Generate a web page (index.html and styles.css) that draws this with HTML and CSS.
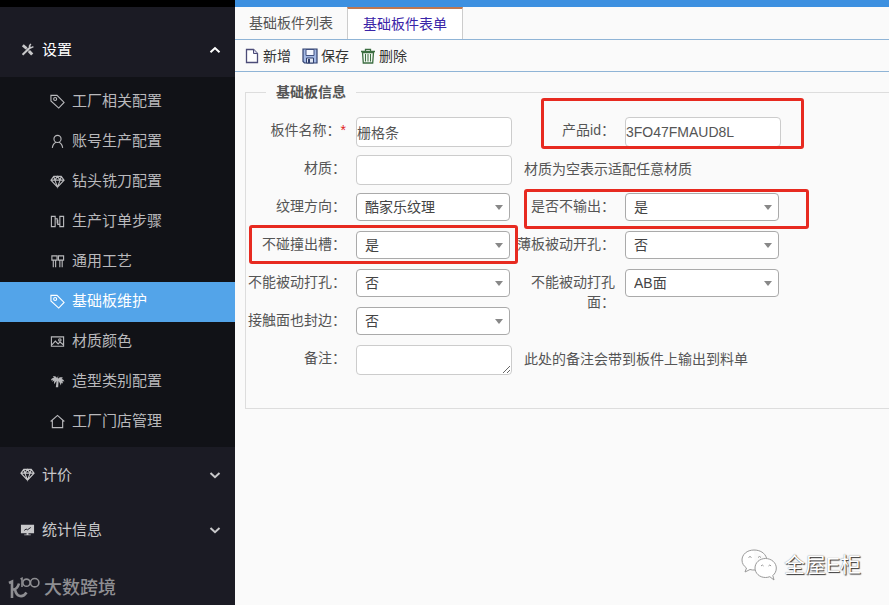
FILE: index.html
```
<!DOCTYPE html>
<html lang="zh-CN">
<head>
    <meta charset="UTF-8">
    <meta name="viewport" content="width=device-width, initial-scale=1.0">
    <title>基础板件表单</title>
    <link rel="stylesheet" href="styles.css">
</head>
<body>
    <svg class="symbols" aria-hidden="true">
        <symbol id="icon-tag" viewBox="0 0 16 16">
            <path d="M1 1.500h6.500l7.500 7.500-5.700 6L1 7.500z"/>
            <circle cx="5.500" cy="5.300" r="1.600"/>
        </symbol>
        <symbol id="icon-gem" viewBox="0 0 16 16">
            <path d="M4 2.500h8l3 4-7 7.500-7-7.500zM1 6.500h14M4 2.500l1.200 4L8 14l2.800-7.500L12 2.500M5.200 6.500L8 2.500l2.800 4"/>
        </symbol>
    </svg>

    <div class="app">
        <aside class="sidebar">
            <button type="button" class="menu-title open">
                <svg class="icon tools" viewBox="0 0 16 16">
                    <path d="M3 3.500l4 3.500" stroke-width="3"/>
                    <path d="M7 7l2 2" stroke-width="1.500"/>
                    <path d="M9.500 9.500l3.500 3.800" stroke-width="3.200"/>
                    <path d="M2.700 13.500L11 5.500" stroke-width="2.200"/>
                    <path d="M11.500 2L10 4.500l1.500 1.800 2.800-1.300" stroke-width="1.600"/>
                </svg>
                <span>设置</span>
                <svg class="arrow" viewBox="0 0 12 8"><path d="M1.500 6.200L6 2l4.500 4.200"/></svg>
            </button>
            <nav class="submenu">
                <a href="#"><svg class="icon"><use href="#icon-tag"/></svg>工厂相关配置</a>
                <a href="#">
                    <svg class="icon" viewBox="0 0 16 16"><circle cx="8" cy="5.200" r="3.800"/><path d="M6.500 8.700c-2.300 1-3.700 3.300-4 6.100M9.500 8.700c2.300 1 3.700 3.300 4 6.100"/></svg>账号生产配置
                </a>
                <a href="#"><svg class="icon"><use href="#icon-gem"/></svg>钻头铣刀配置</a>
                <a href="#">
                    <svg class="icon" viewBox="0 0 16 16"><path d="M1.500 2.500h4v11h-4zM10.500 2.500h4v11h-4zM5.500 5h2.200v5M10.500 11H8.300V6"/></svg>生产订单步骤
                </a>
                <a href="#">
                    <svg class="icon" viewBox="0 0 16 16"><path d="M2 2h5.500v4.500H2zM9 2h5.500v4.500H9zM3.500 6.500V14M6 6.500V14M10.500 6.500V14M13 6.500V14"/></svg>通用工艺
                </a>
                <a href="#" class="active"><svg class="icon"><use href="#icon-tag"/></svg>基础板维护</a>
                <a href="#">
                    <svg class="icon" viewBox="0 0 16 16"><path d="M1.500 3h13v10h-13zM2 11.500l3.700-4 3 3 2-2 3.500 3"/><circle cx="10.500" cy="6.300" r="1.300"/></svg>材质颜色
                </a>
                <a href="#">
                    <svg class="icon solid" viewBox="0 0 16 16"><path d="M7.500 4.500C6.500 2.500 4.500 2 3 3l1.500 1C2.500 4 1.300 5 1 6.800l2-.8-.5 2.500 2-1.500L4.200 11 7 7.500 6.200 14h2.500l.5-6.500 1.500 2.500.8 2.200.8-3 1.500 1-.5-2.700 2 .5c-.5-1.700-1.500-2.500-3-2.700l1.500-1.300c-2-1-4.500-.5-5.300 1.300L8.800 1.500z"/></svg>造型类别配置
                </a>
                <a href="#">
                    <svg class="icon" viewBox="0 0 16 16"><path d="M.7 8L8 1.500 15.300 8M2.500 6.500V14.500h11V6.500"/></svg>工厂门店管理
                </a>
            </nav>
            <button type="button" class="menu-title">
                <svg class="icon"><use href="#icon-gem"/></svg>
                <span>计价</span>
                <svg class="arrow" viewBox="0 0 12 8"><path d="M1.500 2L6 6.200 10.500 2"/></svg>
            </button>
            <button type="button" class="menu-title">
                <svg class="icon solid" viewBox="0 0 16 16">
                    <path d="M1 3h14v9H9v1.200h2.500v1h-7v-1H7V12H1z"/>
                    <path class="chart" d="M4.500 9l2-1.500 1.500.8 3.500-2.500"/>
                </svg>
                <span>统计信息</span>
                <svg class="arrow" viewBox="0 0 12 8"><path d="M1.500 2L6 6.200 10.500 2"/></svg>
            </button>
            <div class="brand">
                <svg class="brand-logo" viewBox="0 0 32 22">
                    <path d="M1 6l3-1.500V21" stroke-width="2.600"/>
                    <path d="M11 6.500C10 10 7.500 12.500 5 12.500M7 12.500c1.500 8 8 8.500 11.500 3" stroke-width="2.600"/>
                    <path d="M12.500 2l1.500-.7V10" stroke-width="1.600"/>
                    <circle cx="18.500" cy="5.700" r="3.600" stroke-width="1.600"/>
                    <circle cx="26.700" cy="5.700" r="4.200" stroke-width="1.600"/>
                </svg>
                <span>大数跨境</span>
            </div>
        </aside>

        <main class="main">
            <div class="tabs">
                <button type="button" class="tab">基础板件列表</button>
                <button type="button" class="tab active">基础板件表单</button>
            </div>
            <div class="toolbar">
                <button type="button">
                    <svg viewBox="0 0 16 16"><path d="M2.500 1.500h7l4 4v9h-11z" fill="#fff" stroke="#4c4c78" stroke-width="1.300"/><path d="M9.500 1.500v4h4" fill="#d8d8ec" stroke="#4c4c78"/></svg>新增
                </button>
                <button type="button">
                    <svg viewBox="0 0 16 16"><path d="M1 1h14v14H2.500L1 13.500z" fill="#a4b9e4" stroke="#30406e" stroke-width="1.200"/><path d="M4 1.500h8v6H4z" fill="#f4f7ff" stroke="#405080"/><path d="M4.500 10h7v5h-7z" fill="#dfe5f2" stroke="#30406e"/><path d="M6 11h2v4H6z" fill="#30406e"/></svg>保存
                </button>
                <button type="button">
                    <svg viewBox="0 0 16 16"><path d="M2.500 4.500h11l-.8 10.500H3.300z" fill="#f0f6f0" stroke="#3c6e41" stroke-width="1.300"/><path d="M1 3.500h14M5.500 3V1.300h5V3" fill="none" stroke="#3c6e41" stroke-width="1.300"/><path d="M5.500 6v7.500M8 6v7.500M10.500 6v7.500" stroke="#3c6e41"/></svg>删除
                </button>
            </div>

            <form class="content">
                <fieldset class="panel">
                    <legend>基础板信息</legend>
                    <div class="fields">
                        <div class="field">
                            <label for="name">板件名称：<em>*</em></label>
                            <input type="text" id="name" value="栅格条">
                        </div>
                        <div class="field">
                            <label for="product-id">产品id：</label>
                            <input type="text" id="product-id" value="3FO47FMAUD8L">
                            <span class="mark mark-product"></span>
                        </div>
                        <div class="field wide">
                            <label for="material">材质：</label>
                            <input type="text" id="material">
                            <span class="hint">材质为空表示适配任意材质</span>
                        </div>
                        <div class="field">
                            <label for="grain">纹理方向：</label>
                            <div class="select"><select id="grain"><option>酷家乐纹理</option></select></div>
                        </div>
                        <div class="field">
                            <label for="no-output">是否不输出：</label>
                            <div class="select"><select id="no-output"><option>是</option><option>否</option></select></div>
                            <span class="mark mark-output"></span>
                        </div>
                        <div class="field">
                            <label for="slot">不碰撞出槽：</label>
                            <div class="select"><select id="slot"><option>是</option><option>否</option></select></div>
                            <span class="mark mark-slot"></span>
                        </div>
                        <div class="field">
                            <label for="thin-hole">薄板被动开孔：</label>
                            <div class="select"><select id="thin-hole"><option>否</option><option>是</option></select></div>
                        </div>
                        <div class="field">
                            <label for="no-hole">不能被动打孔：</label>
                            <div class="select"><select id="no-hole"><option>否</option><option>是</option></select></div>
                        </div>
                        <div class="field">
                            <label for="no-hole-face">不能被动打孔面：</label>
                            <div class="select"><select id="no-hole-face"><option>AB面</option></select></div>
                        </div>
                        <div class="field wide">
                            <label for="edge">接触面也封边：</label>
                            <div class="select"><select id="edge"><option>否</option><option>是</option></select></div>
                        </div>
                        <div class="field wide">
                            <label for="remark">备注：</label>
                            <textarea id="remark" rows="1"></textarea>
                            <span class="hint">此处的备注会带到板件上输出到料单</span>
                        </div>
                    </div>
                </fieldset>
            </form>

            <div class="watermark">
                <svg viewBox="0 0 36 32">
                    <path d="M13 1C6 1 1 5.500 1 11c0 3.500 1.800 6 4.500 8L4 23l5-2.500c1.500.5 3 .6 5 .5M25.500 9C24 4 19 1 13 1"/>
                    <path d="M24.500 9.500c-6 0-10.500 4.300-10.500 9.500s4.500 9.500 10.500 9.500c1.500 0 3-.3 4.300-.8L33 31l-1.200-4.500c2.200-1.800 3.500-4.300 3.500-7.500 0-5.200-4.800-9.500-10.800-9.500z"/>
                    <path d="M7.500 8.500q1.500-2 3 0M17 8.500q1.500-2 3 0M20 17q1.300-2 2.600 0M27.500 17q1.300-2 2.600 0"/>
                </svg>
                <span>全屋E柜</span>
            </div>
        </main>
    </div>
</body>
</html>
```
FILE: styles.css
```
* {
    box-sizing: border-box;
}

body {
    margin: 0;
    font-family: "Liberation Sans", "Noto Sans CJK SC", sans-serif;
    font-size: 14px;
    line-height: 20px;
    color: #555;
    background-color: #fafafa;
}

button, input, select, textarea {
    font: inherit;
    color: inherit;
}

button {
    border: none;
    background: none;
    cursor: pointer;
}

.symbols {
    display: none;
}

.app {
    display: flex;
    min-height: 100vh;
}

/* sidebar */
.sidebar {
    display: flex;
    flex-direction: column;
    flex: none;
    width: 235px;
    padding-top: 15px;
    border-top: 7px solid #000;
    background-color: #1b1b24;
    color: #b9b9bc;
    font-size: 15px;
}

.menu-title {
    display: flex;
    align-items: center;
    gap: 7px;
    height: 55px;
    padding: 0 14px 0 20px;
    text-align: left;
    color: #c8c8ca;
}

.menu-title.open {
    color: #fff;
}

.menu-title span {
    flex: 1;
}

.icon {
    flex: none;
    width: 15px;
    height: 15px;
    fill: none;
    stroke: currentColor;
    stroke-width: 1.2;
}

.icon.tools {
    color: #c8c8ca;
}

.icon.solid {
    fill: currentColor;
    stroke: none;
}

.icon .chart {
    fill: none;
    stroke: #1b1b24;
    stroke-width: 1;
}

.arrow {
    width: 12px;
    height: 8px;
    fill: none;
    stroke: currentColor;
    stroke-width: 2;
}

.submenu {
    padding: 5px 0;
    background-color: #111217;
}

.submenu a {
    display: flex;
    align-items: center;
    gap: 7px;
    height: 40px;
    padding: 0 0 2px 50px;
    color: inherit;
    text-decoration: none;
}

.submenu a.active {
    background-color: #53a4e9;
    color: #fff;
}

.brand {
    display: flex;
    align-items: center;
    gap: 4px;
    margin-top: auto;
    padding: 0 8px 5px;
    color: #8e8e92;
    font-size: 18px;
    font-weight: 500;
    line-height: 24px;
}

.brand-logo {
    width: 32px;
    height: 22px;
    fill: none;
    stroke: currentColor;
}

/* right side */
.main {
    position: relative;
    flex: 1;
    min-width: 0;
    border-top: 7px solid #3d90e0;
}

.tabs {
    display: flex;
    height: 33px;
    border-bottom: 1px solid #8fb4d6;
}

.tab {
    padding: 0 14px;
}

.tab.active {
    padding: 0 15px;
    border: 1px solid #ccc;
    border-top: 2px solid #c07850;
    border-bottom: none;
    background-color: #fff;
    color: #3a25a8;
}

.toolbar {
    display: flex;
    gap: 11px;
    height: 32px;
    padding-left: 9px;
    border-bottom: 1px solid #8fb4d6;
}

.toolbar button {
    display: flex;
    align-items: center;
    gap: 3px;
    padding: 0;
    color: #333;
}

.toolbar svg {
    width: 16px;
    height: 16px;
}

/* form */
.content {
    padding: 10px 0 0 10px;
}

.panel {
    min-width: 0;
    margin: 0;
    padding: 15px 0 33px;
    border: 1px solid #ddd;
    border-right: none;
}

.panel legend {
    margin-left: 20px;
    padding: 0 10px;
    font-weight: bold;
}

.fields {
    display: grid;
    grid-template-columns: 269px 1fr;
    row-gap: 8px;
}

.field {
    position: relative;
    display: flex;
    align-items: flex-start;
    height: 30px;
}

.field.wide {
    grid-column: span 2;
}

.field label {
    flex: none;
    width: 100px;
    margin-right: 10px;
    padding-top: 3px;
    text-align: right;
}

.field em {
    color: #e02020;
    font-style: normal;
}

.field input,
.field textarea {
    width: 156px;
    height: 30px;
    padding: 0;
    border: 1px solid #ccc;
    border-radius: 4px;
    background-color: #fff;
}

.select {
    position: relative;
    width: 154px;
    height: 28px;
}

.select select {
    width: 100%;
    height: 100%;
    padding: 0 8px;
    border: 1px solid #aaa;
    border-radius: 4px;
    background-color: #fff;
    color: #444;
    appearance: none;
}

.select::after {
    content: "";
    position: absolute;
    top: 12px;
    right: 7px;
    border: 4px solid transparent;
    border-top: 5px solid #888;
    border-bottom: none;
    pointer-events: none;
}

.hint {
    padding: 4px 12px;
}

/* red frames over the fields to check */
.mark {
    position: absolute;
    z-index: 1;
    border: 3px solid #e72a20;
    border-radius: 3px;
    pointer-events: none;
}

.mark-product {
    top: -19px;
    left: 26px;
    width: 263px;
    height: 51px;
}

.mark-output {
    top: -4px;
    left: 9px;
    width: 285px;
    height: 40px;
}

.mark-slot {
    top: -6px;
    left: 3px;
    width: 269px;
    height: 39px;
}

.watermark {
    position: absolute;
    right: 28px;
    bottom: 24px;
    display: flex;
    align-items: center;
    gap: 7px;
    color: #fff;
    font-size: 21px;
    line-height: 30px;
    text-shadow: 1px 1px 1px #333, 0 0 1px #777;
}

.watermark svg {
    width: 36px;
    height: 32px;
    fill: #fff;
    stroke: #999;
    stroke-width: 1;
}
```
